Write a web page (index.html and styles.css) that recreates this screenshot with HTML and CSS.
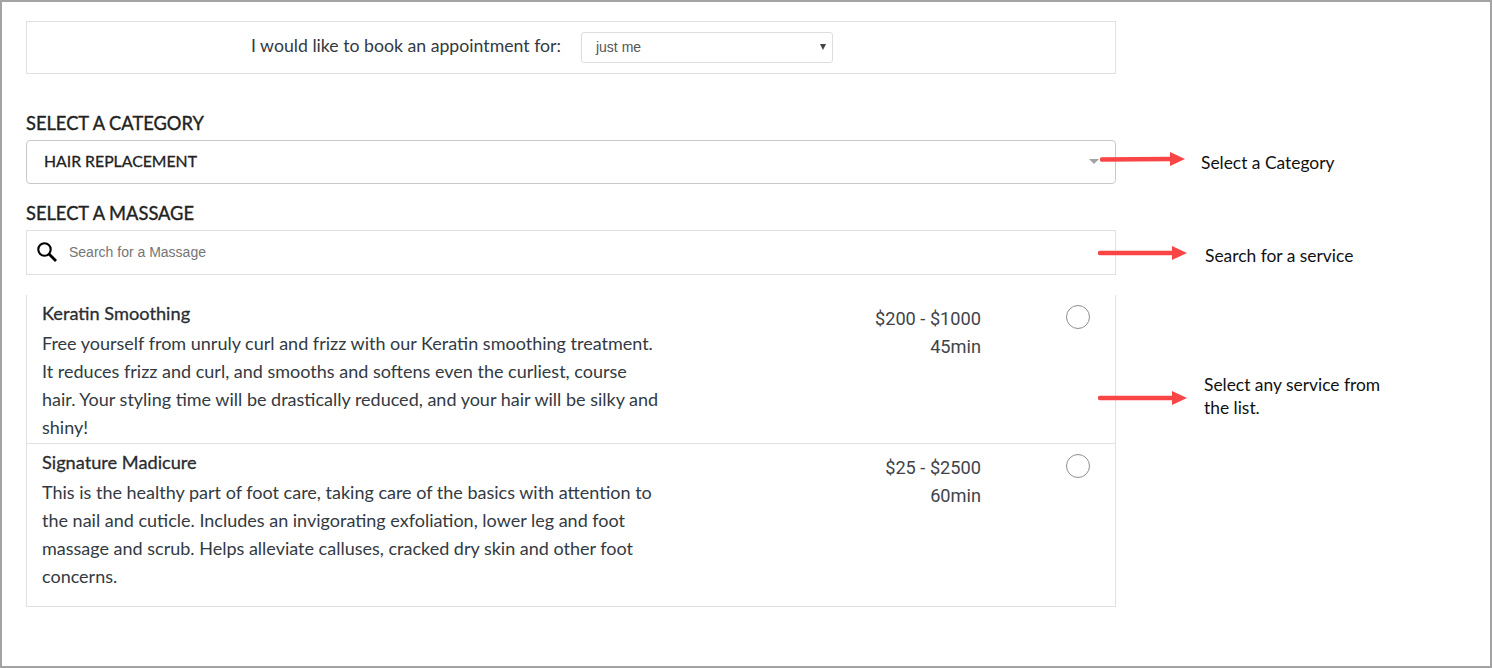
FILE: index.html
```html
<!DOCTYPE html>
<html lang="en">
<head>
<meta charset="utf-8">
<title>Book an appointment</title>
<link rel="stylesheet" href="styles.css">
</head>
<body>
<div class="frame">
  <main class="booking">
    <section class="party">
      <label class="party-label">I would like to book an appointment for:</label>
      <div class="party-select"><span>just me</span><i class="mini-caret"></i></div>
    </section>

    <h2 class="heading heading-category">SELECT A CATEGORY</h2>
    <div class="category"><span>HAIR REPLACEMENT</span><i class="caret"></i></div>

    <h2 class="heading heading-service">SELECT A MASSAGE</h2>
    <div class="search">
      <svg class="search-icon" width="22" height="22" viewBox="0 0 22 22" fill="none" stroke="#000">
        <circle cx="8.5" cy="8.5" r="6.2" stroke-width="2.1"/>
        <path d="M13 13l7 7" stroke-width="2.8"/>
      </svg>
      <span>Search for a Massage</span>
    </div>

    <section class="services">
      <article class="service service-first">
        <div class="info">
          <h3 class="name">Keratin Smoothing</h3>
          <p class="desc">Free yourself from unruly curl and frizz with our Keratin smoothing treatment.<br>It reduces frizz and curl, and smooths and softens even the curliest, course<br>hair. Your styling time will be drastically reduced, and your hair will be silky and<br>shiny!</p>
        </div>
        <div class="meta"><div>$200 - $1000</div><div>45min</div></div>
        <div class="radio"></div>
      </article>
      <article class="service">
        <div class="info">
          <h3 class="name">Signature Madicure</h3>
          <p class="desc">This is the healthy part of foot care, taking care of the basics with attention to<br>the nail and cuticle. Includes an invigorating exfoliation, lower leg and foot<br>massage and scrub. Helps alleviate calluses, cracked dry skin and other foot<br>concerns.</p>
        </div>
        <div class="meta"><div>$25 - $2500</div><div>60min</div></div>
        <div class="radio"></div>
      </article>
    </section>
  </main>

  <svg class="arrow arrow-1" width="86" height="16" viewBox="0 0 86 16"><path d="M2 8.5L70 8" stroke="#f94545" stroke-width="4.5" stroke-linecap="round"/><path d="M70 1l15 7-15 7z" fill="#f94545"/></svg>
  <svg class="arrow arrow-2" width="90" height="16" viewBox="0 0 90 16"><path d="M2 8h72" stroke="#f94545" stroke-width="4.5" stroke-linecap="round"/><path d="M74 1l15 7-15 7z" fill="#f94545"/></svg>
  <svg class="arrow arrow-3" width="90" height="16" viewBox="0 0 90 16"><path d="M2 8h72" stroke="#f94545" stroke-width="4.5" stroke-linecap="round"/><path d="M74 1l15 7-15 7z" fill="#f94545"/></svg>

  <p class="note note-1">Select a Category</p>
  <p class="note note-2">Search for a service</p>
  <p class="note note-3">Select any service from<br>the list.</p>
</div>
</body>
</html>
```
FILE: styles.css
```css
* { box-sizing: border-box; }
html, body { margin: 0; padding: 0; background: #fff; }
.frame {
  position: relative;
  width: 1492px;
  height: 668px;
  border: 2px solid #a3a3a3;
  overflow: hidden;
  padding: 19px 0 0 24px;
  font-family: "Lato", "Liberation Sans", sans-serif;
  color: #2f3338;
}
.booking { width: 1090px; }
.party {
  height: 53px;
  border: 1px solid #e1e1e1;
  display: flex;
  align-items: center;
  padding: 0 0 0 224px;
  gap: 20px;
}
.party-label { font-size: 17.7px; margin-bottom: 5px; color: #333a42; }
.party-select {
  width: 252px;
  height: 31px;
  border: 1px solid #dedede;
  border-radius: 3px;
  display: flex;
  align-items: center;
  justify-content: space-between;
  padding: 0 6px 1px 14px;
  font: 14px "Liberation Sans", sans-serif;
  color: #555;
}
.mini-caret {
  width: 0; height: 0;
  border-left: 3px solid transparent;
  border-right: 3px solid transparent;
  border-top: 6px solid #444;
}
.heading {
  margin: 0;
  font-size: 18.3px;
  font-weight: 400;
  line-height: 20px;
  color: #222;
  -webkit-text-stroke: 0.35px #222;
}
.heading-category { margin-top: 39px; }
.heading-service { margin-top: 19px; }
.category {
  margin-top: 7px;
  height: 44px;
  border: 1px solid #c9c9c9;
  border-radius: 4px;
  display: flex;
  align-items: center;
  justify-content: space-between;
  padding: 0 16px 4px 17px;
  font-size: 15.8px;
  font-weight: 400;
  color: #222;
  -webkit-text-stroke: 0.3px #222;
}
.caret {
  width: 0; height: 0;
  margin-top: 3px;
  border-left: 5px solid transparent;
  border-right: 5px solid transparent;
  border-top: 5px solid #a3a3a3;
}
.search {
  margin-top: 7px;
  height: 45px;
  border: 1px solid #e1e1e1;
  display: flex;
  align-items: center;
  padding: 0 0 1px 9px;
  gap: 11px;
  font: 14px "Liberation Sans", sans-serif;
  color: #757575;
}
.services {
  margin-top: 20px;
  border: 1px solid #e1e1e1;
  border-top: 0;
}
.service {
  display: flex;
  height: 163px;
  padding: 7px 0 0 15px;
  border-top: 1px solid #e1e1e1;
}
.service-first { height: 148px; border-top: 0; }
.info { width: 750px; }
.name {
  margin: 0;
  font-size: 18.2px;
  font-weight: 400;
  line-height: 22px;
  color: #2a2d31;
  -webkit-text-stroke: 0.3px #2a2d31;
}
.desc { margin: 5px 0 0; font-size: 18px; line-height: 28px; white-space: nowrap; color: #333a42; }
.meta {
  width: 189px;
  margin-top: 3px;
  text-align: right;
  font: 400 18.2px/28px "Roboto", sans-serif;
  color: #3f444a;
}
.radio {
  width: 24px;
  height: 24px;
  margin: 3px 0 0 85px;
  border: 1px solid #8e8e8e;
  border-radius: 50%;
}
.arrow { position: absolute; }
.arrow-1 { left: 1098px; top: 149px; }
.arrow-2 { left: 1096px; top: 243px; }
.arrow-3 { left: 1096px; top: 388px; }
.note {
  position: absolute;
  margin: 0;
  font-family: "Lato", sans-serif;
  font-size: 17.4px;
  line-height: 23px;
  color: #111;
}
.note-1 { left: 1199px; top: 149px; }
.note-2 { left: 1203px; top: 242px; }
.note-3 { left: 1202px; top: 371px; }
```
